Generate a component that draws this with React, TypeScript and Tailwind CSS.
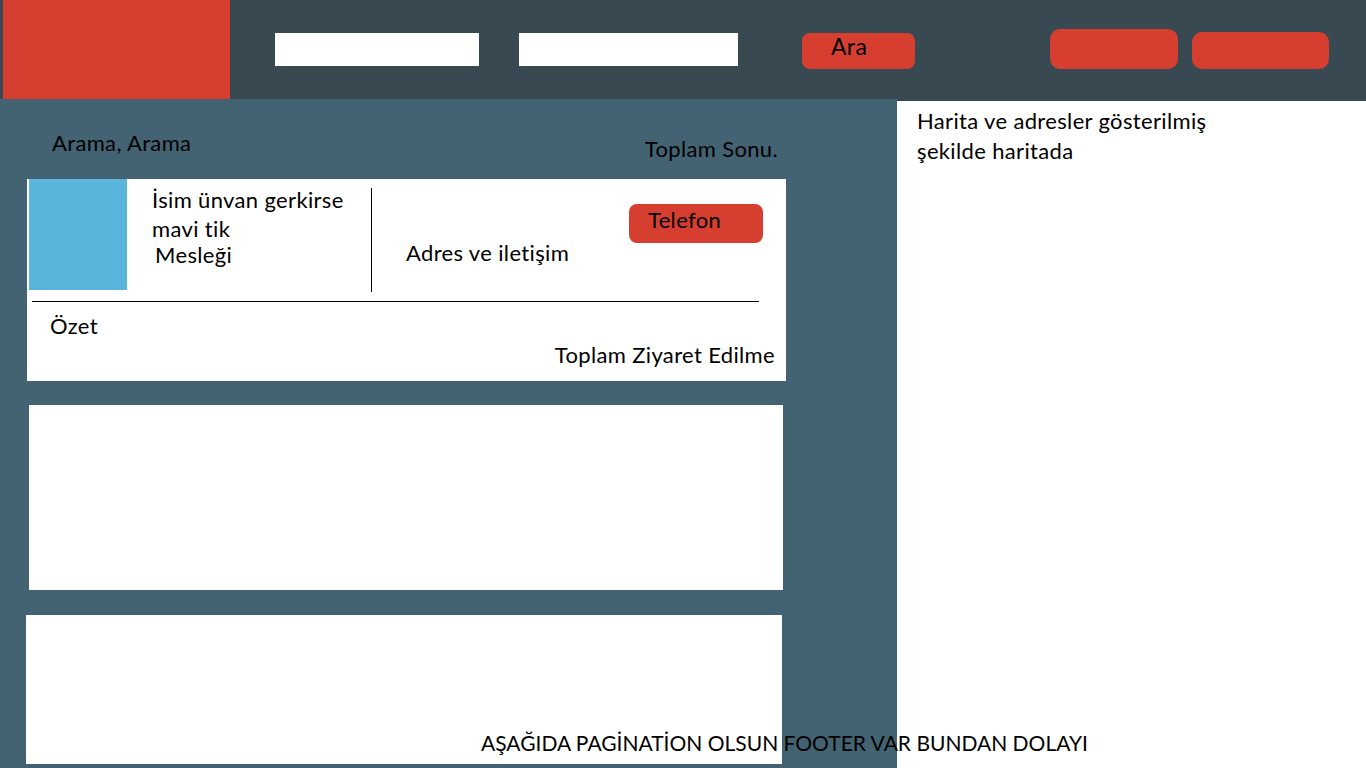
import React from "react";

const font = { fontFamily: "Lato, 'Open Sans', sans-serif" };

export default function App() {
  return (
    <div
      className="relative w-[1366px] h-[768px] overflow-hidden bg-[#394951] text-black tracking-[0.35px] [font-variant-ligatures:none]"
      style={font}
    >
      {/* Header */}
      <header className="flex items-start h-[99px] bg-[#394951]">
        <div className="ml-[3px] w-[227px] h-[99px] bg-[#d63f30]" />
        <div className="ml-[45px] mt-[33px] w-[204px] h-[33px] bg-white" />
        <div className="ml-[40px] mt-[33px] w-[219px] h-[33px] bg-white" />
        <div className="ml-[64px] mt-[33px] w-[113px] h-[36px] rounded-[8px] bg-[#d63f30] pl-[29px] text-[23px] leading-[26px] text-black">
          Ara
        </div>
        <div className="ml-[135px] mt-[29px] w-[128px] h-[40px] rounded-[10px] bg-[#d63f30]" />
        <div className="ml-[14px] mt-[32px] w-[137px] h-[37px] rounded-[10px] bg-[#d63f30]" />
      </header>

      <div className="flex h-[669px]">
        {/* Left list */}
        <main className="w-[897px] h-full bg-[#436373] flex flex-col">
          <div className="flex items-start justify-between h-[80px] text-[22px] leading-[26px]">
            <span className="ml-[52px] mt-[31px]">Arama, Arama</span>
            <span className="mr-[119px] mt-[37px]">Toplam Sonu.</span>
          </div>

          {/* Card 1 */}
          <section className="ml-[27px] w-[759px] h-[202px] bg-white flex flex-col text-[22px] leading-[26px]">
            <div className="flex items-start h-[122px]">
              <div className="ml-[2px] w-[98px] h-[111px] bg-[#5ab5dd]" />
              <div className="ml-[25px] w-[219px] pt-[8px]">
                <div>İsim ünvan gerkirse</div>
                <div className="mt-[3px]">mavi tik</div>
                <div className="ml-[3px]">Mesleği</div>
              </div>
              <div className="mt-[9px] w-px h-[104px] bg-black" />
              <div className="ml-[34px] mt-[61px] flex-1">Adres ve iletişim</div>
              <div className="mr-[23px] mt-[25px] w-[134px] h-[39px] rounded-[8px] bg-[#d63f30] pl-[19px] pt-[3px]">
                Telefon
              </div>
            </div>
            <div className="ml-[5px] w-[727px] h-px bg-black" />
            <div className="ml-[23px] mt-[11px]">Özet</div>
            <div className="mt-[3px] mr-[11px] text-right">Toplam Ziyaret Edilme</div>
          </section>

          {/* Card 2 */}
          <section className="ml-[29px] mt-[24px] w-[754px] h-[185px] bg-white" />

          {/* Card 3 */}
          <section className="ml-[26px] mt-[25px] w-[756px] h-[149px] bg-white" />
        </main>

        {/* Map panel */}
        <aside className="flex-1 h-full bg-white border-t-2 border-[#394951] pl-[20px] pt-[5px] text-[22px] leading-[30px]">
          Harita ve adresler gösterilmiş
          <br />
          şekilde haritada
        </aside>
      </div>

      <div className="absolute left-[481px] top-[730px] text-[21px] leading-[26px] tracking-normal whitespace-nowrap">
        AŞAĞIDA PAGİNATİON OLSUN FOOTER VAR BUNDAN DOLAYI
      </div>
    </div>
  );
}
